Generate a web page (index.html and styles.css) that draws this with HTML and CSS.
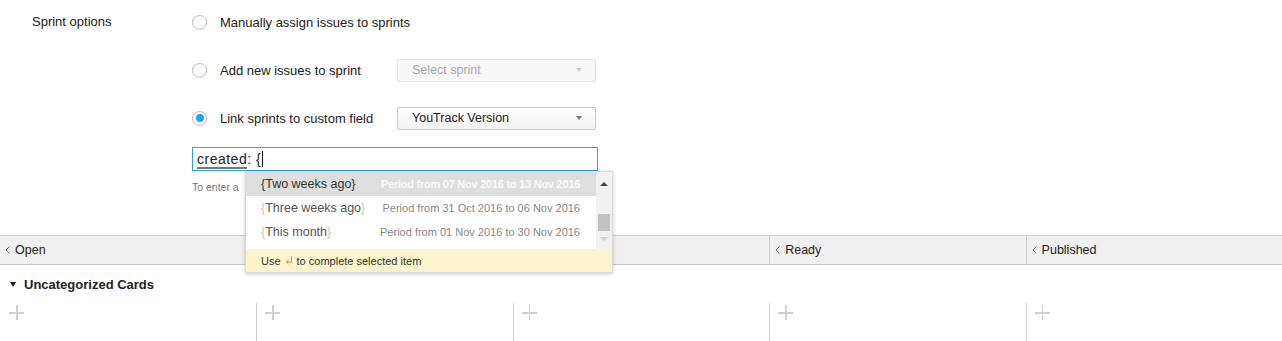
FILE: index.html
```html
<!DOCTYPE html>
<html>
<head>
<meta charset="utf-8">
<link rel="stylesheet" href="styles.css">
</head>
<body>
<div class="settings">
  <div class="settings-label">Sprint options</div>
  <div class="settings-body">
    <div class="options">
      <div class="option"><span class="radio"></span><span class="opt-text">Manually assign issues to sprints</span></div>
      <div class="option"><span class="radio"></span><span class="opt-text wide">Add new issues to sprint</span>
        <div class="select disabled"><span>Select sprint</span><span class="caret-down"></span></div></div>
      <div class="option"><span class="radio checked"></span><span class="opt-text wide">Link sprints to custom field</span>
        <div class="select"><span>YouTrack Version</span><span class="caret-down"></span></div></div>
    </div>
    <div class="query">
      <span class="q-key">created</span><span class="q-rest">: {</span><span class="cursor"></span>
      <div class="dropdown">
        <div class="dd-list">
          <div class="dd-items">
            <div class="dd-item active"><span class="dd-name"><span class="br">{</span>Two weeks ago<span class="br">}</span></span><span class="dd-desc">Period from 07 Nov 2016 to 13 Nov 2016</span></div>
            <div class="dd-item"><span class="dd-name"><span class="br">{</span>Three weeks ago<span class="br">}</span></span><span class="dd-desc">Period from 31 Oct 2016 to 06 Nov 2016</span></div>
            <div class="dd-item"><span class="dd-name"><span class="br">{</span>This month<span class="br">}</span></span><span class="dd-desc">Period from 01 Nov 2016 to 30 Nov 2016</span></div>
          </div>
          <div class="dd-scroll">
            <span class="sc-up"></span>
            <span class="sc-thumb"></span>
            <span class="sc-down"></span>
          </div>
        </div>
        <div class="dd-footer">Use <svg class="enter" width="8" height="9" viewBox="0 0 8 9"><path d="M6.5 0.5 V6 H1.5 M3.5 4 L1.2 6 L3.5 8" fill="none" stroke="#e08a3c" stroke-width="1"/></svg> to complete selected item</div>
      </div>
    </div>
    <div class="hint">To enter a</div>
  </div>
</div>
<div class="board">
  <div class="board-head">
    <div class="col-head"><svg class="chev" width="5" height="8" viewBox="0 0 5 8"><path d="M4.5 0.5 L1 4 L4.5 7.5" fill="none" stroke="#777" stroke-width="1"/></svg>Open</div>
    <div class="col-head"></div>
    <div class="col-head"></div>
    <div class="col-head"><svg class="chev" width="5" height="8" viewBox="0 0 5 8"><path d="M4.5 0.5 L1 4 L4.5 7.5" fill="none" stroke="#777" stroke-width="1"/></svg>Ready</div>
    <div class="col-head"><svg class="chev" width="5" height="8" viewBox="0 0 5 8"><path d="M4.5 0.5 L1 4 L4.5 7.5" fill="none" stroke="#777" stroke-width="1"/></svg>Published</div>
  </div>
  <div class="swimlane"><span class="tri"></span>Uncategorized Cards</div>
  <div class="cells">
    <div class="cell"><span class="plus"></span></div>
    <div class="cell"><span class="plus"></span></div>
    <div class="cell"><span class="plus"></span></div>
    <div class="cell"><span class="plus"></span></div>
    <div class="cell"><span class="plus"></span></div>
  </div>
</div>
</body>
</html>
```
FILE: styles.css
```css
html, body {
  margin: 0;
  padding: 0;
  background: #fff;
}
body {
  font-family: "Liberation Sans", Arial, sans-serif;
  font-size: 13px;
  color: #222;
  overflow: hidden;
}
.settings {
  display: flex;
  height: 235px;
  box-sizing: border-box;
  padding: 10px 0 0 32px;
}
.settings-label {
  width: 160px;
  line-height: 24px;
  flex: none;
}
.settings-body {
  display: flex;
  flex-direction: column;
}
.options {
  display: flex;
  flex-direction: column;
  gap: 24px;
}
.option {
  display: flex;
  align-items: center;
  height: 24px;
}
.radio {
  width: 15px;
  height: 15px;
  box-sizing: border-box;
  border: 1px solid #b8b8b8;
  border-radius: 50%;
  margin-right: 13px;
  display: flex;
  align-items: center;
  justify-content: center;
  background: #fff;
}
.radio.checked::after {
  content: "";
  width: 8px;
  height: 8px;
  border-radius: 50%;
  background: #1ba4f8;
}
.opt-text.wide {
  width: 177px;
}
.select {
  width: 199px;
  height: 23px;
  box-sizing: border-box;
  border: 1px solid #c8c8c8;
  border-radius: 2px;
  background: linear-gradient(#ffffff, #f1f1f1);
  display: flex;
  align-items: center;
  justify-content: space-between;
  padding: 0 13px 0 14px;
  font-size: 12.5px;
  color: #222;
}
.select.disabled {
  border-color: #e2e2e2;
  background: #f8f8f8;
  color: #aaa;
}
.caret-down {
  width: 0;
  height: 0;
  border-left: 3.5px solid transparent;
  border-right: 3.5px solid transparent;
  border-top: 4px solid #777;
}
.select.disabled .caret-down {
  border-top-color: #ccc;
}
.query {
  position: relative;
  margin-top: 17px;
  width: 406px;
  height: 24px;
  box-sizing: border-box;
  border: 1px solid #2aa7e2;
  display: flex;
  align-items: center;
  padding-left: 4px;
  font-size: 14px;
  letter-spacing: 0.5px;
  color: #222;
}
.q-key {
  border-bottom: 2px solid #777;
  line-height: 16px;
  margin-top: 2px;
}
.q-rest {
  line-height: 16px;
}
.cursor {
  width: 1px;
  height: 16px;
  background: #111;
  margin-left: 1px;
}
.hint {
  margin-top: 10px;
  font-size: 10.5px;
  line-height: 13px;
  color: #777;
  white-space: nowrap;
}
.dropdown {
  position: absolute;
  left: 52px;
  top: 23px;
  width: 368px;
  box-sizing: border-box;
  border: 1px solid #dadada;
  background: #fff;
  box-shadow: 0 1px 4px rgba(0, 0, 0, 0.22);
  z-index: 10;
  letter-spacing: 0;
}
.dd-list {
  display: flex;
  height: 77px;
}
.dd-items {
  flex: 1;
}
.dd-item {
  height: 24px;
  display: flex;
  align-items: center;
  justify-content: space-between;
  padding: 0 16px 0 15px;
}
.dd-name {
  font-size: 12.5px;
  color: #555;
}
.dd-name .br {
  color: #f0b9a6;
}
.dd-desc {
  font-size: 11px;
  color: #888;
}
.dd-item.active {
  background: #dedede;
}
.dd-item.active .dd-name,
.dd-item.active .br {
  color: #333;
}
.dd-item.active .dd-desc {
  color: #fafafa;
  font-weight: bold;
  letter-spacing: -0.25px;
}
.dd-scroll {
  width: 16px;
  background: #f1f1f1;
  display: flex;
  flex-direction: column;
  align-items: center;
}
.sc-up {
  margin-top: 10px;
  width: 0;
  height: 0;
  border-left: 4px solid transparent;
  border-right: 4px solid transparent;
  border-bottom: 4px solid #444;
}
.sc-thumb {
  margin-top: 28px;
  width: 12px;
  height: 17px;
  background: #c1c1c1;
}
.sc-down {
  margin-top: 6px;
  width: 0;
  height: 0;
  border-left: 4px solid transparent;
  border-right: 4px solid transparent;
  border-top: 4px solid #cfcfcf;
}
.dd-footer {
  height: 23px;
  background: #fdf3cc;
  display: flex;
  align-items: center;
  padding-left: 15px;
  font-size: 11px;
  color: #333;
  gap: 4px;
}
.enter {
  display: block;
}
.board-head {
  display: grid;
  grid-template-columns: repeat(5, 1fr);
  height: 30px;
  box-sizing: border-box;
  background: #f0f0f0;
  border-top: 1px solid #d2d2d2;
  border-bottom: 1px solid #cacaca;
}
.col-head {
  display: flex;
  align-items: center;
  gap: 5px;
  padding-left: 5px;
  border-left: 1px solid #cfcfcf;
  font-size: 12.5px;
  color: #222;
}
.col-head:first-child {
  border-left: none;
}
.swimlane {
  display: flex;
  align-items: center;
  height: 38px;
  padding-left: 10px;
  font-weight: bold;
  font-size: 13px;
  color: #222;
}
.tri {
  width: 0;
  height: 0;
  border-left: 3.5px solid transparent;
  border-right: 3.5px solid transparent;
  border-top: 5px solid #222;
  margin-right: 8px;
}
.cells {
  display: grid;
  grid-template-columns: repeat(5, 1fr);
  height: 40px;
}
.cell {
  border-left: 1px solid #d0d0d0;
  padding: 2px 0 0 8px;
}
.cell:first-child {
  border-left: 1px solid transparent;
}
.plus {
  display: block;
  position: relative;
  width: 15px;
  height: 15px;
}
.plus::before,
.plus::after {
  content: "";
  position: absolute;
  background: #cfcfcf;
}
.plus::before {
  left: 0;
  top: 7px;
  width: 15px;
  height: 1.5px;
}
.plus::after {
  left: 7px;
  top: 0;
  width: 1.5px;
  height: 15px;
}
```
